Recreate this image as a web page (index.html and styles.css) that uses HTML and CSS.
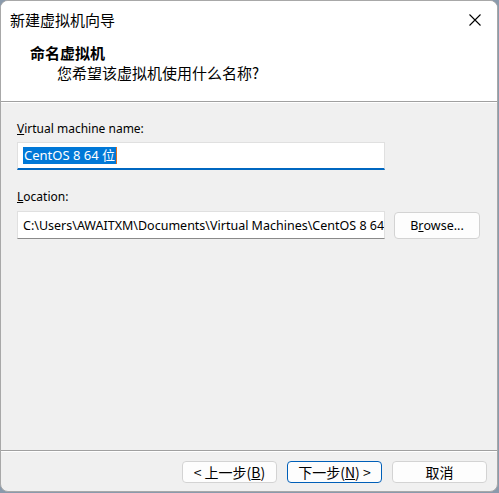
FILE: index.html
```html
<!DOCTYPE html>
<html lang="zh-CN">
<head>
<meta charset="utf-8">
<title>新建虚拟机向导</title>
<link rel="stylesheet" href="styles.css">
</head>
<body>
<div class="window">
  <div class="header">
    <div class="titlebar">
      <span class="title">新建虚拟机向导</span>
      <span class="close" aria-label="关闭">
        <svg width="12" height="12" viewBox="0 0 12 12"><path d="M0.5 0.5 L11.5 11.5 M11.5 0.5 L0.5 11.5" stroke="#000" stroke-width="1.1" fill="none"/></svg>
      </span>
    </div>
    <div class="heading">命名虚拟机</div>
    <div class="subheading">您希望该虚拟机使用什么名称?</div>
  </div>
  <div class="content">
    <div class="label"><u>V</u>irtual machine name:</div>
    <div class="input name-input"><span class="sel">CentOS 8 64 位</span><span class="caret"></span></div>
    <div class="label loc-label"><u>L</u>ocation:</div>
    <div class="row">
      <div class="input loc-input">C:\Users\AWAITXM\Documents\Virtual Machines\CentOS 8 64</div>
      <div class="btn browse">B<u>r</u>owse...</div>
    </div>
  </div>
  <div class="footer">
    <div class="btn nav">&lt; 上一步(<u>B</u>)</div>
    <div class="btn nav primary">下一步(<u>N</u>) &gt;</div>
    <div class="btn nav">取消</div>
  </div>
</div>
</body>
</html>
```
FILE: styles.css
```css
html, body {
  margin: 0;
  padding: 0;
  width: 499px;
  height: 493px;
  overflow: hidden;
  background: #8a9aac;
}
body {
  font-family: "Noto Sans", "Noto Sans CJK SC", sans-serif;
  font-size: 12px;
  color: #000;
}
.window {
  box-sizing: border-box;
  width: 498px;
  height: 492px;
  border: 1px solid #a8a8a8;
  border-radius: 8px;
  background: #f0f0f0;
  overflow: hidden;
  display: flex;
  flex-direction: column;
}
.header {
  background: #fff;
  height: 100px;
  flex: none;
  border-bottom: 1px solid #a0a0a0;
  box-shadow: 0 1px 0 #fff;
  font-family: "Noto Sans CJK SC", sans-serif;
}
.titlebar {
  height: 38px;
  display: flex;
  align-items: center;
  justify-content: space-between;
  padding: 0 16px 0 9px;
}
.title {
  font-size: 15px;
  line-height: 20px;
}
.close {
  display: flex;
  width: 12px;
  height: 12px;
}
.heading {
  font-size: 15px;
  font-weight: bold;
  line-height: 20px;
  padding-left: 29px;
  margin-top: 4px;
}
.subheading {
  font-size: 15px;
  line-height: 20px;
  padding-left: 56px;
}
.content {
  flex: 1;
  padding: 19px 0 0 16px;
}
.label {
  line-height: 16px;
}
.loc-label {
  margin-top: 19px;
}
.input {
  box-sizing: border-box;
  width: 368px;
  background: #fff;
  border: 1px solid #e0e0e0;
  white-space: nowrap;
  overflow: hidden;
  display: flex;
  align-items: center;
}
.name-input {
  height: 28px;
  margin-top: 5px;
  border-bottom: 2px solid #0067c0;
  padding: 0 0 0 5px;
}
.sel {
  background: #0078d7;
  color: #fff;
  font-size: 13px;
  line-height: 17px;
  padding: 0 1px;
}
.caret {
  width: 1px;
  height: 17px;
  background: #e07020;
}
.row {
  display: flex;
  align-items: flex-end;
  margin-top: 6px;
}
.loc-input {
  height: 28px;
  border-bottom-color: #8a8a8a;
  padding: 0 0 0 5px;
  font-size: 12.5px;
}
.btn {
  box-sizing: border-box;
  background: #fdfdfd;
  border: 1px solid #d3d3d3;
  border-radius: 4px;
  display: flex;
  align-items: center;
  justify-content: center;
  white-space: nowrap;
}
.browse {
  width: 86px;
  height: 27px;
  margin-left: 9px;
  font-size: 12.5px;
}
.footer {
  flex: none;
  height: 41px;
  border-top: 1px solid #a0a0a0;
  box-shadow: inset 0 1px 0 #fff;
  display: flex;
  justify-content: flex-end;
  align-items: flex-start;
  padding: 10px 10px 0 0;
  box-sizing: border-box;
  gap: 10px;
}
.nav {
  width: 95px;
  height: 22px;
  font-family: "Noto Sans CJK SC", sans-serif;
  font-size: 14px;
}
.primary {
  border-color: #005fb8;
}
```
